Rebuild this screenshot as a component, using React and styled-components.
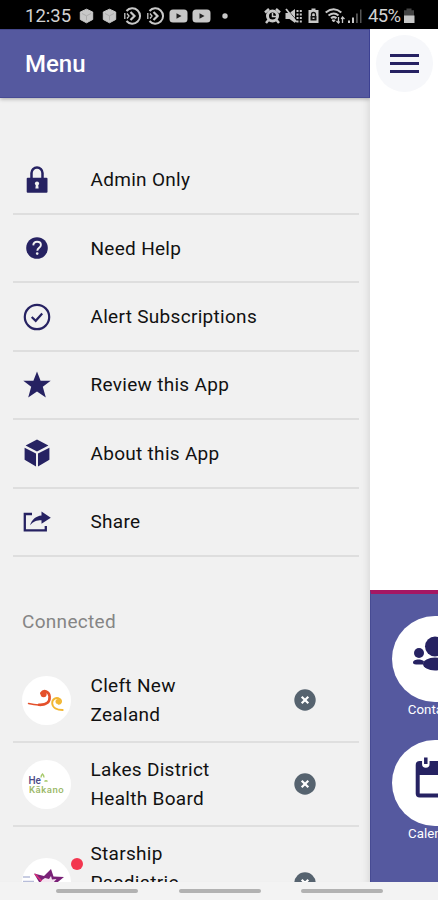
import React from "react";
import styled, { createGlobalStyle } from "styled-components";

const GlobalStyle = createGlobalStyle`
  * {
    box-sizing: border-box;
  }
  body {
    margin: 0;
    background: #f1f1f1;
    font-family: Roboto, "Liberation Sans", sans-serif;
  }
  svg {
    display: block;
    flex-shrink: 0;
  }
`;

const Phone = styled.div`
  width: 438px;
  height: 900px;
  overflow: hidden;
  display: flex;
  flex-direction: column;
`;

const StatusBar = styled.div`
  height: 29px;
  flex-shrink: 0;
  padding: 2px 23px 0 25px;
  background: #000;
  color: #d2d2d2;
  display: flex;
  align-items: center;
  justify-content: space-between;
`;

const StatusGroup = styled.div`
  display: flex;
  align-items: center;
`;

const Spacer = styled.span`
  width: ${(props) => props.$width}px;
`;

const StatusText = styled.span`
  width: ${(props) => props.$width}px;
  font-size: 18.5px;
  line-height: 22px;
  letter-spacing: ${(props) => props.$spacing || 0}px;
  white-space: nowrap;
`;

const Screen = styled.div`
  flex: 1;
  min-height: 0;
  display: flex;
`;

const Drawer = styled.div`
  width: 370px;
  flex-shrink: 0;
  background: #f1f1f1;
  overflow: hidden;
  display: flex;
  flex-direction: column;
  box-shadow: inset -8px 0 9px -7px rgba(0, 0, 0, 0.12);
`;

const DrawerHeader = styled.header`
  height: 69px;
  flex-shrink: 0;
  padding: 0 25px;
  display: flex;
  align-items: center;
  background: #55599f;
  border-top: 1px solid #45488b;
  border-bottom: 1px solid #474b93;
  border-right: 1px solid #3c4092;
  box-shadow: 0 1px 4px rgba(0, 0, 0, 0.3);
  color: #fff;
  font-size: 24px;
  font-weight: 500;
`;

const List = styled.div`
  margin: ${(props) => props.$top}px 11px 0 13px;
  flex-shrink: 0;
`;

const MenuRow = styled.div`
  height: 68.4px;
  display: flex;
  align-items: center;
  border-bottom: 2px solid #dedede;
`;

const MenuIcon = styled.div`
  width: 48px;
  margin-right: 29.5px;
  display: flex;
  justify-content: center;
`;

const Label = styled.div`
  font-size: 19px;
  line-height: 29px;
  letter-spacing: 0.3px;
  color: #111;
`;

const SectionTitle = styled.div`
  margin: 50px 0 0 22px;
  flex-shrink: 0;
  font-size: 19px;
  line-height: 29px;
  letter-spacing: 0.3px;
  color: #858585;
`;

const OrgRow = styled.div`
  height: ${(props) => (props.$tall ? 113 : 84)}px;
  padding-left: 9px;
  display: flex;
  align-items: center;
  border-bottom: 2px solid #dfdfdf;
`;

const Avatar = styled.div`
  position: relative;
  width: 49px;
  height: 49px;
  margin-right: 19.5px;
  border-radius: 50%;
  background: #fff;
`;

const AlertDot = styled.span`
  position: absolute;
  top: 0;
  right: -12px;
  width: 12px;
  height: 12px;
  border-radius: 50%;
  background: #f3364f;
`;

const OrgName = styled(Label)`
  width: 140px;
  min-height: ${(props) => (props.$tall ? 87 : 58)}px;
  margin-right: 63px;
`;

const Page = styled.div`
  flex: 1;
  min-width: 0;
  overflow: hidden;
  background: #fff;
  display: flex;
  flex-direction: column;
  justify-content: space-between;
`;

const MenuButton = styled.button`
  width: 57px;
  height: 57px;
  margin: 6px 0 0 6px;
  padding: 0;
  border: 0;
  border-radius: 50%;
  background: #f6f7fa;
  display: flex;
  flex-direction: column;
  align-items: center;
  justify-content: center;
  gap: 5px;
`;

const MenuLine = styled.span`
  width: 29px;
  height: 3px;
  background: #262262;
`;

const TilePanel = styled.div`
  height: 292px;
  padding: 21.5px 0 0 20.5px;
  background: #55599f;
  border-top: 4px solid #a51763;
  border-left: 1px solid #474b93;
`;

const Tile = styled.div`
  width: 86px;
  height: 124.5px;
  display: flex;
  flex-direction: column;
  align-items: center;
  color: #fff;
  font-size: 13.3px;
  line-height: 16px;
`;

const TileCircle = styled.div`
  width: 86px;
  height: 86px;
  flex-shrink: 0;
  border-radius: 50%;
  background: #fff;
  overflow: hidden;
`;

const NavBar = styled.div`
  height: 18px;
  flex-shrink: 0;
  padding: 7px 0 0 56px;
  display: flex;
  gap: 40.5px;
  background: #f3f3f3;
`;

const NavHandle = styled.span`
  width: 82px;
  height: 4px;
  border-radius: 2px;
  background: #b2b2b2;
`;

const NAVY = "#262262";
const GREY = "#c8c8c8";

// status bar icons
const CubeNotice = () => (
  <svg width="23" height="18" viewBox="0 0 23 18">
    <path d="M11.5 2.200 17.700 5v7.500l-6.200 3.300-6.200-3.300V5z" fill={GREY} stroke={GREY} strokeLinejoin="round" />
    <path d="m7 6.500 4.500 2.300L16 6.500M11.500 8.800v4.500" fill="none" stroke="#adadad" />
  </svg>
);

const ArrowNotice = () => (
  <svg width="23" height="18" viewBox="0 0 23 18" fill="none" stroke={GREY} strokeWidth="2">
    <path d="M5.500 4A7.700 7.700 0 1 1 5.500 14" />
    <path d="m9.500 5 4 4-4 4" strokeWidth="2.200" />
    <path d="M3.800 6v6M6 6.500 8 9l-2 2.500" strokeWidth="1.300" />
  </svg>
);

const VideoNotice = () => (
  <svg width="23" height="18" viewBox="0 0 23 18">
    <rect x="2.500" y="2.500" width="18" height="13" rx="3.500" fill={GREY} />
    <path d="m9.500 6.200 5 2.800-5 2.800z" fill="#222" />
  </svg>
);

const DotNotice = () => (
  <svg width="23" height="18" viewBox="0 0 23 18">
    <circle cx="12" cy="9" r="2.700" fill={GREY} />
  </svg>
);

const Alarm = () => (
  <svg width="17" height="18" viewBox="0 0 17 18">
    <circle cx="8.500" cy="9" r="5" fill="none" stroke={GREY} strokeWidth="3" />
    <path d="M1 5.500 5 2M12 2l4 3.500M4.500 13l-2.500 3M12.500 13l2.500 3" stroke={GREY} strokeWidth="2.500" />
    <path d="M8.500 6v3.500H12" fill="none" stroke={GREY} strokeWidth="1.500" />
  </svg>
);

const Mute = () => (
  <svg width="19" height="18" viewBox="0 0 19 18">
    <path d="M1.500 6h4l5.500-4v14l-5.500-4h-4z" fill={GREY} />
    <path d="m3 2 10 12" stroke="#000" strokeWidth="1" />
    <path d="m2 2 10.500 13" stroke={GREY} strokeWidth="1.800" />
    <path d="M13.500 3v13M16.800 3v13" fill="none" stroke={GREY} strokeWidth="2" strokeDasharray="2 1.500" />
  </svg>
);

const SavedBattery = () => (
  <svg width="11" height="18" viewBox="0 0 11 18">
    <path d="M3.500 1.500h4V3H10.500v13H.5V3h3z" fill={GREY} />
    <path d="M3.500 9V7.500a2 2 0 0 1 4 0V9" fill="none" stroke="#111" strokeWidth="1.300" />
    <path d="M2.500 9h6v4.500h-6z" fill="#111" />
    <path d="M4.500 10.500h2v1.500h-2z" fill={GREY} />
  </svg>
);

const Wifi = () => (
  <svg width="20" height="18" viewBox="0 0 20 18" fill="none" stroke={GREY} strokeWidth="2">
    <path d="M.7 5.500Q9 -1 16.300 5.500M3.500 8.500Q9 4.500 13.500 8.500M6 11.200Q8.800 9 11.500 11.200" />
    <path d="m7 13 1.600 2L10.200 13z" fill={GREY} strokeWidth="1" />
    <path d="M13.500 10v6m-2-2 2 2 1.200-1.500M17.500 16v-6m-1.300 2 1.300-2 2 2" strokeWidth="1.300" />
  </svg>
);

const Signal = () => (
  <svg width="14" height="18" viewBox="0 0 14 18" fill={GREY}>
    <path d="M0 13.500h2V16H0zM4 10.500h2V16H4z" />
    <path d="M8 6.500h1.800V16H8zM12 2.500h1.500V16H12z" fill="#555" />
  </svg>
);

const Battery = () => (
  <svg width="12" height="18" viewBox="0 0 12 18">
    <path d="M3.500 1.500h5v1.700h2.500V9H1V3.200h2.500z" fill="#444" />
    <path d="M1 8.500h10.500V16H1z" fill={GREY} />
  </svg>
);

// drawer icons
const Lock = () => (
  <svg width="28" height="28" viewBox="0 0 28 28">
    <path d="M8.500 13V7a5.500 5.500 0 0 1 11 0v6" fill="none" stroke={NAVY} strokeWidth="2.500" />
    <rect x="3.700" y="11.800" width="20.800" height="15" rx="1" fill={NAVY} />
    <circle cx="14" cy="17.500" r="2.100" fill="#f1f1f1" />
    <path d="M13 17.500h2l.6 5h-3.200z" fill="#f1f1f1" />
  </svg>
);

const Help = () => (
  <svg width="28" height="28" viewBox="0 0 28 28">
    <circle cx="14" cy="14" r="10.800" fill={NAVY} />
    <path d="M10.300 11.400c.1-2.400 1.600-3.600 3.800-3.600 2.300 0 3.800 1.300 3.800 3.200 0 2.900-3.600 2.800-3.600 5.800" fill="none" stroke="#f1f1f1" strokeWidth="1.900" />
    <circle cx="14.200" cy="19.600" r="1.300" fill="#f1f1f1" />
  </svg>
);

const CheckCircle = () => (
  <svg width="28" height="28" viewBox="0 0 28 28" fill="none" stroke={NAVY}>
    <circle cx="14" cy="14" r="12.200" strokeWidth="2.200" />
    <path d="m8.700 14 4 3.800 6.500-7.300" strokeWidth="2.200" />
  </svg>
);

const Star = () => (
  <svg width="28" height="28" viewBox="0 0 28 28">
    <path d="m14 .5 3.600 9.200h10.100l-7.900 6.100 3 10.700L14 20.500l-8.800 6 3-10.700L.3 9.700h10.100z" fill={NAVY} />
  </svg>
);

const Cube = () => (
  <svg width="28" height="28" viewBox="0 0 28 28" fill={NAVY}>
    <path d="M14 .6 25.400 6.600 14 12.500 2.600 6.600zM1.600 8.700 13 14.600v12.800L1.600 20.700zM26.400 8.700 15 14.600v12.800l11.400-6.700z" />
  </svg>
);

const Share = () => (
  <svg width="28" height="28" viewBox="0 0 28 28">
    <path d="M9 6H1.800v16.300h21V18" fill="none" stroke={NAVY} strokeWidth="2.300" />
    <path d="M18.500 3.500 27.800 9.800l-9.300 6v-3.500c-5 0-8 1.200-11.500 5C9 11 13.200 8 18.500 7.400z" fill={NAVY} />
  </svg>
);

const Remove = () => (
  <svg width="22" height="22" viewBox="0 0 22 22">
    <circle cx="11" cy="11" r="10.700" fill="#56636f" />
    <path d="m7.700 7.700 6.600 6.600m0-6.600-6.600 6.600" stroke="#fff" strokeWidth="2.200" />
  </svg>
);

// organisation logos
const KoruLogo = () => (
  <svg width="49" height="49" viewBox="0 0 49 49" fill="none" strokeLinecap="round">
    <path d="M6.500 27.500c6 1.500 12 2 17 .5" stroke="#e4502b" strokeWidth="1.500" />
    <path d="M17 28.800c8 .4 11-3 10.600-8.300-.5-5.500-6-7-8.300-3.300" stroke="#e4502b" strokeWidth="2.600" />
    <circle cx="21.600" cy="18.300" r="3" fill="#e4502b" />
    <path d="M37.500 23c-3-2.500-7.500 0-7.300 4.300.2 4.500 5 6.700 10.500 6.700" stroke="#f2b632" strokeWidth="1.900" />
    <path d="M38.500 23.500c1.500 2 .3 4.500-2 4.300" stroke="#f2b632" strokeWidth="1.800" />
    <circle cx="36" cy="25.500" r="2.500" fill="#f2b632" />
  </svg>
);

const KakanoLogo = () => (
  <svg width="49" height="49" viewBox="0 0 49 49">
    <text fontFamily="Roboto, sans-serif" fontWeight="500">
      <tspan x="6.500" y="23.500" fontSize="10" fill="#4a4a86">He</tspan>
      <tspan x="7" y="32.700" fontSize="9.500" letterSpacing=".55" fill="#9ab765">Kākano</tspan>
    </text>
    <path d="M19 17.500q0-2 1.500-3.500 1.500 1.500 1.500 3.500M22.500 21.500q1.500-1.500 3 0" fill="none" stroke="#a6c96b" strokeWidth="1.300" />
  </svg>
);

const StarshipLogo = () => (
  <svg width="49" height="49" viewBox="0 0 49 49">
    <path d="M1 19h7M1 23.500h11" stroke="#b7bdd9" strokeWidth="1.500" />
    <path d="m12 15.500 10 2.500 7-7 2.500 7.500 10.500.5-8 6.500 2 12-11-6-9 7 2.500-12z" fill="#792177" />
    <path d="m18.500 23 4.500-3 4 1 2-3 1 3.500 4.500-.5-3.500 4-11 5 .5-4.500z" fill="#f4e5f0" />
    <path d="m13 16 6.500 7" stroke="#d92f78" strokeWidth="1.600" />
  </svg>
);

// home tiles
const Contacts = () => (
  <svg width="86" height="86" viewBox="0 0 86 86" fill={NAVY}>
    <circle cx="43" cy="30.500" r="10" />
    <ellipse cx="43" cy="48" rx="12" ry="6.500" />
    <circle cx="27" cy="37" r="5" />
    <path d="M21 46.500c0-3.500 8-4 11-1.200l-1 3.200h-7c-2 0-3-.8-3-2z" />
    <circle cx="59" cy="37" r="5" />
    <ellipse cx="59" cy="46" rx="6" ry="2.800" />
  </svg>
);

const Calendar = () => (
  <svg width="86" height="86" viewBox="0 0 86 86">
    <rect x="25.700" y="23" width="35" height="32.500" rx="2" fill="none" stroke={NAVY} strokeWidth="4" />
    <path d="M25 22h36v13H25z" fill={NAVY} />
    <path d="M33.800 19v5M52.500 19v5" stroke="#fff" strokeWidth="7.500" strokeLinecap="round" />
    <path d="M33.800 17.500v6.500M52.500 17.500v6.500" stroke={NAVY} strokeWidth="3.500" />
  </svg>
);

const menuItems = [
  { label: "Admin Only", icon: <Lock /> },
  { label: "Need Help", icon: <Help /> },
  { label: "Alert Subscriptions", icon: <CheckCircle /> },
  { label: "Review this App", icon: <Star /> },
  { label: "About this App", icon: <Cube /> },
  { label: "Share", icon: <Share /> },
];

const organisations = [
  { name: "Cleft New Zealand", logo: <KoruLogo /> },
  { name: "Lakes District Health Board", logo: <KakanoLogo /> },
  { name: "Starship Paediatric", logo: <StarshipLogo />, alert: true, tall: true },
];

const App = () => {
  return (
    <Phone>
      <GlobalStyle />
      <StatusBar>
        <StatusGroup>
          <StatusText $width={50}>12:35</StatusText>
          <CubeNotice />
          <CubeNotice />
          <ArrowNotice />
          <ArrowNotice />
          <VideoNotice />
          <VideoNotice />
          <DotNotice />
        </StatusGroup>
        <StatusGroup>
          <Alarm />
          <Spacer $width={3} />
          <Mute />
          <Spacer $width={4.5} />
          <SavedBattery />
          <Spacer $width={6.5} />
          <Wifi />
          <Spacer $width={3} />
          <Signal />
          <Spacer $width={6} />
          <StatusText $width={35} $spacing={-0.6}>
            45%
          </StatusText>
          <Battery />
        </StatusGroup>
      </StatusBar>
      <Screen>
        <Drawer>
          <DrawerHeader>Menu</DrawerHeader>
          <List $top={48.6}>
            {menuItems.map((item) => (
              <MenuRow key={item.label}>
                <MenuIcon>{item.icon}</MenuIcon>
                <Label>{item.label}</Label>
              </MenuRow>
            ))}
          </List>
          <SectionTitle>Connected</SectionTitle>
          <List $top={23.5}>
            {organisations.map((org) => (
              <OrgRow key={org.name} $tall={org.tall}>
                <Avatar>
                  {org.logo}
                  {org.alert && <AlertDot />}
                </Avatar>
                <OrgName $tall={org.tall}>{org.name}</OrgName>
                <Remove />
              </OrgRow>
            ))}
          </List>
        </Drawer>
        <Page>
          <MenuButton>
            <MenuLine />
            <MenuLine />
            <MenuLine />
          </MenuButton>
          <TilePanel>
            <Tile>
              <TileCircle>
                <Contacts />
              </TileCircle>
              Contacts
            </Tile>
            <Tile>
              <TileCircle>
                <Calendar />
              </TileCircle>
              Calendar
            </Tile>
          </TilePanel>
        </Page>
      </Screen>
      <NavBar>
        <NavHandle />
        <NavHandle />
        <NavHandle />
      </NavBar>
    </Phone>
  );
};

export default App;
